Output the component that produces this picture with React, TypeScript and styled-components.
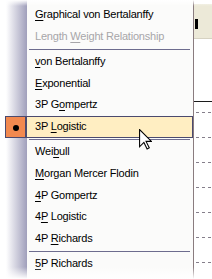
import React from 'react';
import styled, { createGlobalStyle } from 'styled-components';

const GlobalStyle = createGlobalStyle`
    html, body {
        margin: 0;
        padding: 0;
        background: #ffffff;
        overflow: hidden;
    }
    body {
        width: 212px;
        height: 279px;
        font-family: "Liberation Sans", Arial, sans-serif;
    }
`;

const Page = styled.div`
    position: relative;
    display: flex;
    width: 212px;
    height: 279px;
    overflow: hidden;
`;

const Menu = styled.div`
    width: 194px;
    flex-shrink: 0;
    box-sizing: border-box;
    padding-top: 3.8px;
    border-right: 1px solid #8a7c7f;
    background: linear-gradient(to right, #ffffff 0px, #ffffff 6px, #a09fbb 27px, #fbfbfa 27px);
`;

const Row = styled.div`
    display: flex;
    height: 21.73px;
    padding-left: 5px;
`;

const CheckCell = styled.div<{ $active?: boolean }>`
    width: 21px;
    box-sizing: border-box;
    display: flex;
    align-items: center;
    justify-content: center;
    padding-top: 2px;
    border: 1px solid ${p => (p.$active ? '#4b4a6e' : 'transparent')};
    background: ${p => (p.$active ? '#f2894f' : 'transparent')};
`;

const Dot = styled.span`
    width: 6px;
    height: 6px;
    border-radius: 50%;
    background: #000000;
`;

const Label = styled.div<{ $active?: boolean; $disabled?: boolean }>`
    width: 167px;
    box-sizing: border-box;
    padding-left: 8px;
    border: 1px solid ${p => (p.$active ? '#4b4a6e' : 'transparent')};
    background: ${p => (p.$active ? '#ffeec2' : 'transparent')};
    color: ${p => (p.$disabled ? '#a7a6a9' : '#000000')};
    font-size: 11px;
    line-height: 19.73px;
    letter-spacing: -0.2px;
    white-space: nowrap;

    u {
        text-decoration: underline;
        text-underline-offset: 2px;
    }
`;

const Separator = styled.div`
    height: 3.6px;
    padding: 1.3px 0 0 29px;
    box-sizing: border-box;

    &::after {
        content: '';
        display: block;
        width: 161px;
        height: 1px;
        background: #6d6c8e;
    }
`;

const Strip = styled.div`
    flex: 1;
    display: flex;
    flex-direction: column;
    background: #ffffff;
`;

const Toolbar = styled.div`
    margin-top: 4px;
    height: 35px;
    box-sizing: border-box;
    padding: 15px 0 0 1px;
    background: #ece9d8;
    border-bottom: 1px solid #d6d2c2;
`;

const Caret = styled.div`
    width: 3px;
    height: 10px;
    background: #000000;
`;

const Chart = styled.svg`
    display: block;
`;

const Fade = styled.div<{ $bottom?: boolean }>`
    position: absolute;
    left: 0;
    right: 0;
    ${p => (p.$bottom ? 'bottom: 0; height: 12px;' : 'top: 0; height: 6px;')}
    background: linear-gradient(
        ${p => (p.$bottom ? 'to bottom' : 'to top')},
        rgba(255, 255, 255, 0),
        rgba(255, 255, 255, 1)
    );
    pointer-events: none;
`;

const Cursor = styled.svg`
    position: absolute;
    left: 139px;
    top: 129px;
`;

type Item = { text: React.ReactNode; active?: boolean; disabled?: boolean } | 'sep';

const items: Item[] = [
    { text: <><u>G</u>raphical von Bertalanffy</> },
    { text: <>Length <u>W</u>eight Relationship</>, disabled: true },
    'sep',
    { text: <><u>v</u>on Bertalanffy</> },
    { text: <><u>E</u>xponential</> },
    { text: <>3P G<u>o</u>mpertz</> },
    { text: <>3P <u>L</u>ogistic</>, active: true },
    'sep',
    { text: <>Wei<u>b</u>ull</> },
    { text: <><u>M</u>organ Mercer Flodin</> },
    { text: <><u>4</u>P Gompertz</> },
    { text: <>4<u>P</u> Logistic</> },
    { text: <>4P <u>R</u>ichards</> },
    'sep',
    { text: <><u>5</u>P Richards</> },
];

const gridLines = [73, 98, 123, 148, 173, 198, 223];

const App: React.FC = () => {
    return (
        <Page>
            <GlobalStyle />
            <Menu>
                {items.map((item, i) =>
                    item === 'sep' ? (
                        <Separator key={i} />
                    ) : (
                        <Row key={i}>
                            <CheckCell $active={item.active}>{item.active && <Dot />}</CheckCell>
                            <Label $active={item.active} $disabled={item.disabled}>
                                {item.text}
                            </Label>
                        </Row>
                    )
                )}
            </Menu>
            <Strip>
                <Toolbar>
                    <Caret />
                </Toolbar>
                <Chart width="18" height="240" viewBox="0 0 18 240">
                    <line x1="0" y1="62.5" x2="18" y2="62.5" stroke="#1c1c1c" strokeWidth="1" />
                    {gridLines.map(y => (
                        <line
                            key={y}
                            x1="2"
                            y1={y + 0.5}
                            x2="18"
                            y2={y + 0.5}
                            stroke="#857f8b"
                            strokeWidth="1"
                            strokeDasharray="3 3"
                        />
                    ))}
                </Chart>
            </Strip>
            <Cursor width="13" height="21" viewBox="0 0 12 19.5">
                <path
                    d="M0.5 0.5 V16.5 L4.5 12.5 L7.5 18.5 L9.5 17.5 L6.5 11.5 H11.5 Z"
                    fill="#ffffff"
                    stroke="#000000"
                    strokeWidth="1"
                    strokeLinejoin="miter"
                />
            </Cursor>
            <Fade />
            <Fade $bottom />
        </Page>
    );
};

export default App;
